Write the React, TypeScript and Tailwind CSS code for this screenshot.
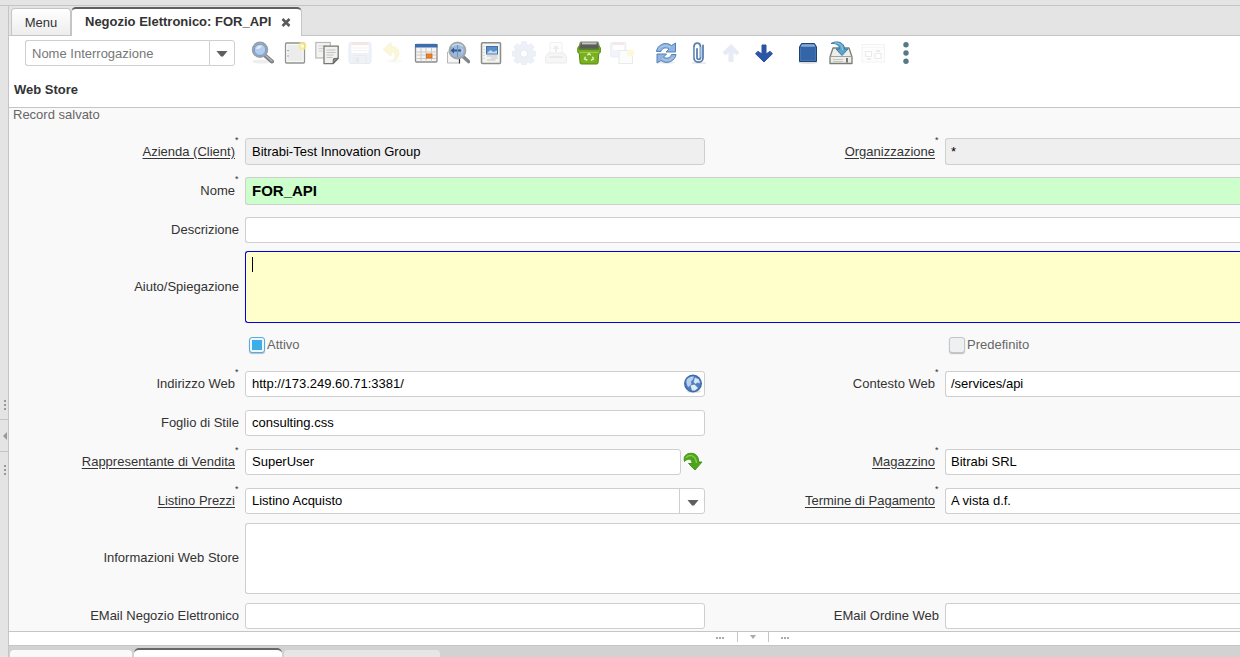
import type { ReactNode } from "react";

const base = "block min-w-0 border border-[#cfcfcf] text-[13px] text-black outline-none";
const field = `${base} bg-white`;
const locked = `${base} bg-[#efefef]`;

function Svg({ children, size = 24 }: { children: ReactNode; size?: number }) {
  return (
    <svg width={size} height={size} viewBox={`0 0 ${size} ${size}`} fill="none" aria-hidden="true">
      {children}
    </svg>
  );
}

function SearchIcon() {
  return (
    <Svg>
      <ellipse cx="12" cy="20.500" rx="10" ry="2" fill="#eeeeee" />
      <path d="M15 14.500 22 20.500" stroke="#777b80" strokeWidth="4" strokeLinecap="round" />
      <path d="M15.500 14.500 22 20" stroke="#b5b8bb" strokeWidth="1.500" strokeLinecap="round" />
      <circle cx="10" cy="8.800" r="7.200" fill="#b4cdec" stroke="#9aa0a6" strokeWidth="2" />
      <circle cx="10" cy="8.800" r="5.700" stroke="#6f9bd3" />
      <path d="M6 8c1-3 3.500-4 6-3.500-1 2.500-3 4-6 3.500Z" fill="#e2eefb" />
    </Svg>
  );
}

function NewIcon() {
  return (
    <Svg>
      <rect x="2.500" y="2" width="19" height="20" rx="1" fill="#ececec" stroke="#939590" strokeWidth="1.300" />
      <path d="M4 3.500h16v17H4z" stroke="#fafafa" />
      <path d="M4 9.500h2M4 15h2" stroke="#aaa" />
      <circle cx="19.500" cy="5" r="4" fill="#f7ec85" opacity=".8" />
      <circle cx="19.500" cy="5" r="1.600" fill="#fffef0" />
    </Svg>
  );
}

function CopyIcon() {
  return (
    <Svg>
      <rect x=".8" y="1.500" width="14.500" height="15.500" fill="#f3f3f3" stroke="#b9bab7" strokeWidth="1.200" />
      <path d="M3.500 5h8M3.500 7.500h5M3.500 10h4" stroke="#d0d0d0" />
      <path d="M9 5.200h14.200v12.300l-5 5.200H9z" fill="#f1f1f0" stroke="#777972" strokeWidth="1.300" />
      <path d="M11.500 9h9M11.500 11.500h9M11.500 14h7M11.500 16.500h6" stroke="#c3c4c1" />
      <path d="m18 22.500.5-4.800 4.500-.5z" fill="#8b8d87" stroke="#666861" />
    </Svg>
  );
}

function SaveIcon() {
  return (
    <Svg>
      <rect x="1" y="1.500" width="22" height="21" rx="2" fill="#edf2fa" stroke="#e5ebf5" />
      <rect x="3.500" y="2" width="17" height="10" fill="#fefefe" />
      <path d="M3.500 3h17" stroke="#fbe3e0" strokeWidth="2" />
      <path d="M5 7h14M5 9.500h14" stroke="#f3f3f3" />
      <rect x="6" y="14.500" width="12" height="8" fill="#f2f2f2" stroke="#e8ebef" />
      <rect x="8" y="16.500" width="3" height="5" fill="#e1e9f4" />
    </Svg>
  );
}

function UndoIcon() {
  return (
    <Svg>
      <ellipse cx="13" cy="20" rx="8" ry="2" fill="#fafafa" />
      <path
        d="M10 1.500 2 8.500l8 6.500v-4.500c4.500 0 6 3.500 2 10C19.500 17.500 20.500 5.500 10 5.500z"
        fill="#fcf7d6"
        stroke="#f9f3d2"
        strokeLinejoin="round"
      />
    </Svg>
  );
}

function GridIcon() {
  return (
    <Svg>
      <rect x="1.500" y="3.500" width="21.500" height="17.500" rx="1" fill="#f4f4f4" stroke="#8a8c88" strokeWidth="1.300" />
      <path d="M1 3h22.500v3.500H1z" fill="#3c6cb0" />
      <path d="M2.500 11h19.500M2.500 14h19.500M2.500 17.500h19.500M7 7v13.500M12 7v13.500M17.500 7v13.500" stroke="#c8cac8" />
      <rect x="12.500" y="13" width="5.500" height="4" fill="#ef8224" stroke="#cf6713" strokeWidth=".8" />
    </Svg>
  );
}

function ZoomAcrossIcon() {
  return (
    <Svg>
      <path d="M1.500 11h12v11h-12z" fill="#f5f5f5" stroke="#b5b5b5" />
      <path d="M13.500 15v7.500" stroke="#333" strokeWidth="1.200" />
      <path d="m17.500 16 5 4.500" stroke="#84878a" strokeWidth="3.600" strokeLinecap="round" />
      <circle cx="11.500" cy="9.500" r="8" fill="#9cb8d8" stroke="#a3a6a7" strokeWidth="1.800" />
      <path d="m4.500 9.500 3.500-3v2h7v2H8v2z" fill="#2f5b92" />
      <path d="M11.500 4v12" stroke="#6f93bd" />
      <path d="M6 5.500c3-3 8-3 11 0" stroke="#c5d8ec" strokeWidth="1.500" />
      <path d="M15 6.500c2 2 2 4 0 6" stroke="#c5d8ec" />
    </Svg>
  );
}

function ReportIcon() {
  return (
    <Svg>
      <rect x="2.500" y="1.800" width="19" height="20.700" rx="1" fill="#f3f3f2" stroke="#8b8d88" strokeWidth="1.500" />
      <rect x="7.500" y="5.500" width="11" height="7.500" fill="#5c8fc9" stroke="#3f70aa" />
      <path d="m8 12 3.500-3 3 2 3.500-1.500V12.500H8z" fill="#c7d9eb" />
      <path d="M5 5v14" stroke="#c5c5c5" strokeDasharray="1 2" />
      <path d="M8 15h10.500M12 17h6.500M8 19h8.500" stroke="#c3c4c2" />
    </Svg>
  );
}

function GearIcon() {
  return (
    <Svg>
      <path
        d="m9.800.8 4.400 0 .7 3.100 1.400.6L19 2.800l3 3-1.800 2.700.6 1.400 3 .7v4.200l-3 .6-.6 1.500L22 19.500l-3 3-2.700-1.700-1.400.6-.7 2.300H9.800l-.7-2.300-1.400-.6L5 22.500l-3-3 1.700-2.600-.6-1.500-2.900-.6v-4.200l2.900-.7.6-1.400L2 5.800l3-3 2.700 1.700 1.400-.6z"
        fill="#ecf1f8"
        stroke="#e8eef6"
      />
      <circle cx="12" cy="12.500" r="3.700" fill="#fff" stroke="#e4eaf4" />
    </Svg>
  );
}

function PrintIcon() {
  return (
    <Svg>
      <path d="M6 1.500h12v11H6z" fill="#fdfdfd" stroke="#f1f1f1" />
      <path d="m12 4-3.500 4H11v3h2V8h2.500z" fill="#ececec" />
      <path d="M4 12h16l2.500 4v4.500q0 1.500-1.500 1.500H3q-1.500 0-1.500-1.500V16z" fill="#f6f6f6" stroke="#ececec" />
      <path d="M5.500 16h13" stroke="#e6e6e6" strokeWidth="1.500" />
    </Svg>
  );
}

function BinIcon() {
  return (
    <Svg>
      <path d="M3.500 1.200h17.500l2 7.300H1.300z" fill="#5b5e58" stroke="#85897f" strokeWidth="1.300" strokeLinejoin="round" />
      <path d="M5 2.500h14.500" stroke="#c4c6c1" strokeWidth="1.800" />
      <path
        d="M.8 6.500 2.500 5v3.500h19V5l1.800 1.500v5l-1.500 1-.8 9.500q-.1 1-1.200 1H4.300q-1.100 0-1.200-1l-.8-9.500-1.500-1z"
        fill="#79b021"
        stroke="#538a0f"
        strokeLinejoin="round"
      />
      <path d="M2.500 11.500h19" stroke="#9ccd48" />
      <path d="m10.300 14.200 1.700-1.700 1.800 1.700" stroke="#dcefb6" strokeWidth="1.500" />
      <path d="m15.500 15.800.9 2.200-2.400 1.300M8.500 15.800 7.600 18l2.700 1.300" stroke="#dcefb6" strokeWidth="1.500" />
    </Svg>
  );
}

function ExportIcon() {
  return (
    <Svg>
      <rect x=".8" y="1.500" width="15" height="14.500" rx="1" fill="#f1f5fb" stroke="#e8edf6" />
      <rect x="3" y="2" width="11" height="7" fill="#fff" />
      <path d="M3 3h11" stroke="#f9dedb" strokeWidth="1.500" />
      <rect x="9" y="9.500" width="13.500" height="13" fill="#fcfcfc" stroke="#eaeaea" />
      <circle cx="20.500" cy="12" r="3.500" fill="#fcf9d6" />
    </Svg>
  );
}

function RefreshIcon() {
  return (
    <Svg>
      <ellipse cx="12" cy="21.500" rx="9" ry="1.500" fill="#ececec" />
      <path
        d="M2.500 10.500C3 4.500 11-.5 17.500 4.500L21.500 2v9h-9.500l3-3c-4-2.500-7-.5-8 2.500z"
        fill="#8fb4df"
        stroke="#5580ba"
        strokeLinejoin="round"
      />
      <path
        d="M22 13.500C21 20 13 24 7 19.500L3 22v-9h9.500l-3 3.200c3.500 2 7 .5 8-2.700z"
        fill="#8fb4df"
        stroke="#5580ba"
        strokeLinejoin="round"
      />
      <path d="M4.500 8.500c2.500-4 8-5 12-2M20 15.500c-2.500 4-8 5-12 2" stroke="#b5cfec" />
    </Svg>
  );
}

function ClipIcon() {
  return (
    <Svg>
      <path d="M5 22h14" stroke="#e5e5e5" strokeWidth="1.500" />
      <path
        d="M10 8v8.500c0 2.500 3.500 2.500 3.500 0V6c0-5.300-6.500-5.300-6.500 0v11c0 5.500 9 5.500 9 0V4.500"
        stroke="#5b80b0"
        strokeWidth="1.800"
        strokeLinecap="round"
      />
      <path d="M7.200 6v11M13.600 6v10" stroke="#a4c0e2" strokeWidth=".8" />
    </Svg>
  );
}

function UpIcon() {
  return (
    <Svg>
      <path d="m12 3.500-8 8 2.500 2.300 3.500-2.800v9.500h4V11l3.500 2.800 2.500-2.300z" fill="#e6ebf5" stroke="#e6ebf5" strokeLinejoin="round" />
    </Svg>
  );
}

function DownIcon() {
  return (
    <Svg>
      <path d="m12 21-8.500-8.300 2.500-2.300 4 2.600V4h4v9l4-2.600 2.500 2.300z" fill="#2b55a7" stroke="#2b52a0" strokeLinejoin="round" />
    </Svg>
  );
}

function BoxIcon() {
  return (
    <Svg>
      <ellipse cx="12" cy="21.500" rx="10" ry="1.500" fill="#dedede" />
      <path d="M5.500 2.500h13l2 3.500v14.500h-17V6z" fill="#3465a8" stroke="#1f4274" strokeLinejoin="round" />
      <path d="M6 3.200h12l1.400 2.500H4.600z" fill="#87aad6" />
      <path d="M4.600 6.800v12.700h14.800V6.800" stroke="#4d7cba" strokeWidth=".8" />
    </Svg>
  );
}

function ArchiveIcon() {
  return (
    <Svg>
      <path d="M4 7h16l3 9v6.500H1V16z" fill="#ecece9" stroke="#7b7d77" strokeWidth="1.300" strokeLinejoin="round" />
      <path d="M1.500 15.500h21" stroke="#a0a29c" />
      <path d="M4 18.500h10M4 20.500h10" stroke="#c3c5bf" />
      <path d="M18 17v4.500" stroke="#464842" strokeWidth="1.400" />
      <path d="M2 2.500C8-1 15.500 1.500 15.500 8H19l-6 6.500L7 8h3.500C10.500 4 7 2 2 2.500Z" fill="#5ba2cd" stroke="#3a7aa5" strokeLinejoin="round" />
      <path d="M6 2c4-.5 7.500 2 7.500 7" stroke="#a4d0e8" />
    </Svg>
  );
}

function ProcessIcon() {
  return (
    <Svg>
      <rect x="1" y="3.500" width="22.500" height="17.500" fill="#fdfdfd" stroke="#f3f3f3" />
      <path d="M1 6.500h22.500" stroke="#f6f6f6" />
      <path d="M4.500 10.500h6v5h-6zM14 12.500h6v5h-6z" fill="#fff" stroke="#ebebeb" strokeWidth="1.200" />
      <path d="M6 18h4M15 10h4" stroke="#ebebeb" strokeWidth="2" />
    </Svg>
  );
}

function MoreIcon() {
  return (
    <Svg>
      <g fill="#557985">
        <circle cx="12" cy="3.800" r="2.700" />
        <circle cx="12" cy="12" r="2.700" />
        <circle cx="12" cy="20.200" r="2.700" />
      </g>
    </Svg>
  );
}

function GlobeIcon() {
  return (
    <Svg size={20}>
      <ellipse cx="11" cy="17.500" rx="7" ry="1.500" fill="#ddd" />
      <circle cx="10" cy="9.500" r="8.300" fill="#4f7fbe" stroke="#3f6cac" strokeWidth="1.400" />
      <path d="M3.500 6C5 3.500 8 2 11 2.500l-1 3L8 7.500 8.500 10l-3 3C4 12 3 9 3.500 6Z" fill="#b9d0ec" />
      <path d="m12 3.500 4 2 1 4-2.500-1L12.500 10 10.500 8z" fill="#d4e3f5" />
      <path d="m7.500 11.500 4-1 3.500 3.500-3 2.500H9z" fill="#e2ecf8" />
    </Svg>
  );
}

function GreenArrowIcon() {
  return (
    <Svg size={20}>
      <path
        d="M1.500 9.500C0 4 3.500 1.300 8 1.300c5 0 7.700 3.200 7.700 8.700H19l-7 8-6.500-6.500H9c.5-4.500-4-6-7.500-2Z"
        fill="#4da51c"
        stroke="#459716"
        strokeLinejoin="round"
      />
      <path d="M3 6C5 2.500 12.500 1.500 13.500 11" stroke="#86cb4c" strokeWidth="1.400" />
    </Svg>
  );
}

function Caret() {
  return (
    <svg width="12" height="6" viewBox="0 0 12 6" aria-hidden="true">
      <path d="M.5 0h11L7 5.500H5z" fill="#5f5f5f" />
    </svg>
  );
}

type Tool = { name: string; icon: ReactNode; off?: boolean };

const tools: Tool[][] = [
  [
    { name: "Cerca", icon: <SearchIcon /> },
    { name: "Nuovo", icon: <NewIcon /> },
    { name: "Copia", icon: <CopyIcon /> },
    { name: "Salva", icon: <SaveIcon />, off: true },
    { name: "Annulla", icon: <UndoIcon />, off: true },
    { name: "Griglia", icon: <GridIcon /> },
    { name: "Zoom", icon: <ZoomAcrossIcon /> },
    { name: "Report", icon: <ReportIcon /> },
    { name: "Processo", icon: <GearIcon />, off: true },
    { name: "Stampa", icon: <PrintIcon />, off: true },
    { name: "Elimina", icon: <BinIcon /> },
    { name: "Salva e crea", icon: <ExportIcon />, off: true },
  ],
  [
    { name: "Aggiorna", icon: <RefreshIcon /> },
    { name: "Allegato", icon: <ClipIcon /> },
    { name: "Precedente", icon: <UpIcon />, off: true },
    { name: "Successivo", icon: <DownIcon /> },
  ],
  [
    { name: "Blocca", icon: <BoxIcon /> },
    { name: "Archivio", icon: <ArchiveIcon /> },
    { name: "Flusso", icon: <ProcessIcon />, off: true },
    { name: "Altro", icon: <MoreIcon /> },
  ],
];

const groupWidths = ["w-[384px]", "w-[122px]", "w-[122px]"];

function Label({ id, text, required, link }: { id: string; text: string; required?: boolean; link?: boolean }) {
  return (
    <div className="flex justify-end self-stretch pr-1.5">
      <label htmlFor={id} className={`self-center whitespace-nowrap ${link ? "underline underline-offset-2" : ""}`}>
        {text}
      </label>
      {required && <span className="w-1 pt-1 text-[9px] leading-[9px]" aria-hidden="true">*</span>}
    </div>
  );
}

function Check({ id, text, checked }: { id: string; text: string; checked?: boolean }) {
  return (
    <div className="flex items-center gap-0.5 pl-1 text-[#666]">
      <input
        id={id}
        type="checkbox"
        defaultChecked={checked}
        className="grid size-4 appearance-none place-items-center rounded-[3px] border border-[#c3c5c8] bg-[#eff0f2] shadow-[0_1px_1px_#bbb] checked:border-[#55abe0] checked:bg-[#eff6fb] checked:before:size-2.5 checked:before:bg-[#3daee9] checked:before:content-['']"
      />
      <label htmlFor={id}>{text}</label>
    </div>
  );
}

function Row({ children, tall }: { children: ReactNode; tall?: boolean }) {
  return (
    <div className={`grid grid-cols-[236px_460px_240px_1fr] items-center ${tall ? "h-[76px]" : "h-[39px]"}`}>
      {children}
    </div>
  );
}

export default function App() {
  return (
    <div className="flex h-screen flex-col overflow-hidden bg-[#e4e4e4] font-['Liberation_Sans',Arial,sans-serif] text-[13px] leading-4 text-[#333]">
      <div className="h-1.5 shrink-0 border-b border-[#c5c5c5]" />
      <div className="flex min-h-0 flex-1">
        <aside className="flex w-[9px] shrink-0 flex-col border-r border-[#c5c5c5] pt-[394px] text-[#999]">
          <div className="flex h-[19px] items-start justify-end">
            <svg width="4" height="10" viewBox="0 0 4 10" fill="currentColor" aria-hidden="true">
              <path d="M0 0h2v2H0zM0 4h2v2H0zM0 8h2v2H0z" />
            </svg>
          </div>
          <button type="button" aria-label="Espandi" className="flex h-[33px] items-center justify-end border-y border-[#c5c5c5]">
            <svg width="6" height="8" viewBox="0 0 6 8" fill="currentColor" aria-hidden="true">
              <path d="M5 0v8L1 4z" />
            </svg>
          </button>
          <div className="flex h-[28px] items-center justify-end pt-2">
            <svg width="4" height="10" viewBox="0 0 4 10" fill="currentColor" aria-hidden="true">
              <path d="M0 0h2v2H0zM0 4h2v2H0zM0 8h2v2H0z" />
            </svg>
          </div>
        </aside>

        <main className="flex min-w-0 flex-1 flex-col bg-white">
          <nav className="flex h-[30px] shrink-0 items-end border-b border-[#c5c5c5] bg-[#e4e4e4] pl-0.5">
            <button type="button" className="h-[27px] w-[60px] rounded-t border border-b-0 border-[#c5c5c5] bg-linear-to-b from-white to-[#ededed] pt-0.5">
              Menu
            </button>
            <div className="-mb-px flex h-[29px] w-[231px] items-center justify-between rounded-t-[5px] border border-t-2 border-b-0 border-x-[#c5c5c5] border-t-[#5f5f5f] bg-white pr-2.5 pl-[13px]">
              <button type="button" className="pb-0.5 font-bold">Negozio Elettronico: FOR_API</button>
              <button type="button" aria-label="Chiudi">
                <svg width="10" height="9" viewBox="0 0 10 9" aria-hidden="true">
                  <path d="m1.500 1 7 7m0-7-7 7" stroke="#5a5a5a" strokeWidth="2.600" />
                </svg>
              </button>
            </div>
          </nav>

          <div className="flex h-[34px] shrink-0 items-center pl-4">
            <div className="mr-[15px] flex w-[210px]">
              <input
                aria-label="Nome Interrogazione"
                placeholder="Nome Interrogazione"
                className={`${field} h-[26px] flex-1 rounded-l-[3px] border-r-0 px-1.5 placeholder:text-[#777]`}
              />
              <button type="button" aria-label="Apri elenco" className="flex h-[26px] w-[26px] items-center justify-center rounded-r-[3px] border border-[#cfcfcf] pt-0.5">
                <Caret />
              </button>
            </div>
            <div className="flex gap-5">
              {tools.map((group, i) => (
                <div key={i} className={`flex justify-between ${groupWidths[i]}`}>
                  {group.map((tool) => (
                    <button key={tool.name} type="button" aria-label={tool.name} disabled={tool.off} className="size-6">
                      {tool.icon}
                    </button>
                  ))}
                </div>
              ))}
            </div>
          </div>

          <h1 className="flex h-[38px] shrink-0 items-center border-b border-[#c5c5c5] pt-0.5 pl-[5px] font-bold">Web Store</h1>

          <form className="min-h-0 flex-1 overflow-hidden border-b border-[#c5c5c5] bg-[#f9f9f9]">
            <p className="h-6 pl-1 leading-[14px] text-[#666]">Record salvato</p>
            <Row>
              <Label id="client" text="Azienda (Client)" required link />
              <input id="client" readOnly defaultValue="Bitrabi-Test Innovation Group" className={`${locked} h-[27px] rounded-[3px] px-1.5`} />
              <Label id="org" text="Organizzazione" required link />
              <input id="org" readOnly defaultValue="*" className={`${locked} h-[27px] rounded-l-[3px] border-r-0 px-[5px]`} />
            </Row>
            <Row>
              <Label id="name" text="Nome" required />
              <input
                id="name"
                defaultValue="FOR_API"
                className="col-span-3 h-7 min-w-0 rounded-l-[3px] border border-r-0 border-[#cfcfcf] bg-[#ccffcc] px-1.5 text-[15px] font-bold text-black outline-none"
              />
            </Row>
            <Row>
              <Label id="description" text="Descrizione" />
              <input id="description" className={`${field} col-span-3 h-[26px] rounded-l-[3px] border-r-0 px-1.5`} />
            </Row>
            <Row tall>
              <Label id="help" text="Aiuto/Spiegazione" />
              <div className="relative col-span-3">
                <textarea
                  id="help"
                  className="block h-[72px] w-full resize-none rounded-l-[3px] border border-r-0 border-[#0000e6] bg-[#ffffcc] px-1.5 py-1 text-black caret-transparent outline-none"
                />
                <span className="absolute top-1.5 left-[7px] h-[15px] w-px bg-black" />
              </div>
            </Row>
            <Row>
              <span />
              <Check id="active" text="Attivo" checked />
              <span />
              <Check id="default" text="Predefinito" />
            </Row>
            <Row>
              <Label id="url" text="Indirizzo Web" required />
              <div className="flex h-[26px] items-center rounded-[3px] border border-[#cfcfcf] bg-white pr-px">
                <input id="url" defaultValue="http://173.249.60.71:3381/" className="min-w-0 flex-1 px-1.5 text-black outline-none" />
                <button type="button" aria-label="Apri indirizzo"><GlobeIcon /></button>
              </div>
              <Label id="context" text="Contesto Web" required />
              <input id="context" defaultValue="/services/api" className={`${field} h-[26px] rounded-l-[3px] border-r-0 px-[5px]`} />
            </Row>
            <Row>
              <Label id="css" text="Foglio di Stile" />
              <input id="css" defaultValue="consulting.css" className={`${field} h-[26px] rounded-[3px] px-1.5`} />
            </Row>
            <Row>
              <Label id="rep" text="Rappresentante di Vendita" required link />
              <div className="flex items-center gap-0.5">
                <input id="rep" defaultValue="SuperUser" className={`${field} h-[26px] flex-1 rounded-[3px] px-1.5`} />
                <button type="button" aria-label="Cerca rappresentante" className="w-[22px]"><GreenArrowIcon /></button>
              </div>
              <Label id="warehouse" text="Magazzino" required link />
              <input id="warehouse" defaultValue="Bitrabi SRL" className={`${field} h-[26px] rounded-l-[3px] border-r-0 px-[5px]`} />
            </Row>
            <Row>
              <Label id="pricelist" text="Listino Prezzi" required link />
              <div className="relative">
                <select id="pricelist" className={`${field} h-[26px] w-full appearance-none rounded-[3px] px-1.5`}>
                  <option>Listino Acquisto</option>
                </select>
                <span className="pointer-events-none absolute inset-y-0 right-0 flex w-[26px] items-center justify-center border-l border-[#cfcfcf] pt-1">
                  <Caret />
                </span>
              </div>
              <Label id="terms" text="Termine di Pagamento" required link />
              <input id="terms" defaultValue="A vista d.f." className={`${field} h-[26px] rounded-l-[3px] border-r-0 px-[5px]`} />
            </Row>
            <Row tall>
              <Label id="info" text="Informazioni Web Store" />
              <textarea id="info" className={`${field} col-span-3 h-[71px] resize-none rounded-l-[3px] border-r-0 px-1.5 py-1`} />
            </Row>
            <Row>
              <Label id="email" text="EMail Negozio Elettronico" />
              <input id="email" className={`${field} h-[26px] rounded-[3px] px-1.5`} />
              <Label id="ordermail" text="EMail Ordine Web" />
              <input id="ordermail" className={`${field} h-[26px] rounded-l-[3px] border-r-0 px-[5px]`} />
            </Row>
          </form>

          <div className="flex h-3.5 shrink-0 items-start border-b border-[#c5c5c5] pl-[706px] text-[#aaa]">
            <svg width="22" height="11" viewBox="0 0 22 11" fill="currentColor" aria-hidden="true">
              <path d="M1 5h2v2H1zM4 5h2v2H4zM7 5h2v2H7z" />
            </svg>
            <button type="button" aria-label="Comprimi" className="flex h-[10px] w-8 items-center justify-center border-x border-[#c5c5c5]">
              <svg width="8" height="4" viewBox="0 0 8 4" fill="currentColor" aria-hidden="true">
                <path d="M1 0h6L4 4z" />
              </svg>
            </button>
            <svg width="22" height="11" viewBox="0 0 22 11" fill="currentColor" aria-hidden="true">
              <path d="M12 5h2v2h-2zM15 5h2v2h-2zM18 5h2v2h-2z" />
            </svg>
          </div>
          <div className="flex h-[11px] shrink-0 items-end gap-0.5 bg-[#d2d2d2] pl-px">
            <div className="h-[7px] w-[122px] rounded-t bg-[#f9f9f9]" />
            <div className="h-[9px] w-[148px] rounded-t-[5px] border-t-2 border-[#666] bg-white" />
            <div className="h-[7px] w-[156px] rounded-t bg-[#e6e6e6]" />
          </div>
        </main>
      </div>
    </div>
  );
}
